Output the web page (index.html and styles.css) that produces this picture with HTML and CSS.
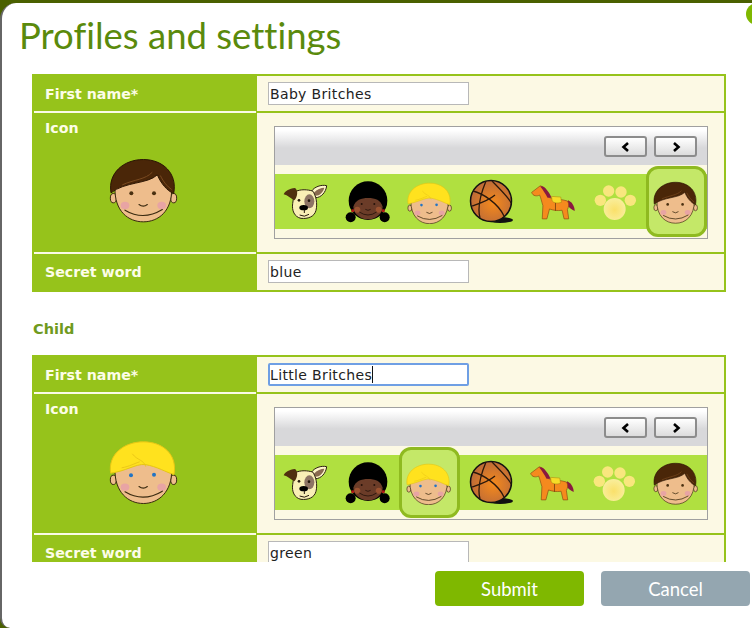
FILE: index.html
```html
<!DOCTYPE html>
<html lang="en">
<head>
    <meta charset="UTF-8">
    <meta name="viewport" content="width=device-width, initial-scale=1.0">
    <title>Profiles and settings</title>
    <link rel="stylesheet" href="styles.css">
</head>
<body>
    <svg class="sprites" width="0" height="0">
        <defs>
            <symbol id="ic-boy" viewBox="60 20 210 200">
                <ellipse cx="73" cy="146" rx="9" ry="14" fill="#eebd8c" stroke="#3a2a10" stroke-width="3"/>
                <ellipse cx="254" cy="146" rx="9" ry="14" fill="#eebd8c" stroke="#3a2a10" stroke-width="3"/>
                <path d="M78 115C78 50 248 50 248 115C250 185 208 217 163 217C118 217 76 185 78 115Z" fill="#eebd8c" stroke="#3a2a10" stroke-width="3"/>
                <path d="M66 130C56 70 105 30 163 30C222 30 266 72 254 132C234 124 216 102 205 76C176 104 108 96 66 130Z" fill="#4a2608" stroke="#2c1604" stroke-width="3"/>
                <path d="M100 106C135 90 170 90 190 68M214 78C224 98 234 110 248 120" fill="none" stroke="#7a4a20" stroke-width="3"/>
                <circle cx="127" cy="131" r="6" fill="#4a3010"/>
                <circle cx="195" cy="131" r="6" fill="#4a3010"/>
                <ellipse cx="108" cy="168" rx="13" ry="11" fill="#e8a4a4"/>
                <ellipse cx="218" cy="168" rx="13" ry="11" fill="#e8a4a4"/>
                <path d="M150 165Q163 175 175 165M108 182Q163 215 220 180" fill="none" stroke="#3a2a10" stroke-width="3.5" stroke-linecap="round"/>
            </symbol>
            <symbol id="ic-blond" viewBox="60 20 210 200">
                <ellipse cx="73" cy="148" rx="9" ry="14" fill="#eebd8c" stroke="#3a2a10" stroke-width="3"/>
                <ellipse cx="254" cy="148" rx="9" ry="14" fill="#eebd8c" stroke="#3a2a10" stroke-width="3"/>
                <path d="M78 115C78 50 248 50 248 115C250 185 208 219 163 219C118 219 76 185 78 115Z" fill="#eebd8c" stroke="#3a2a10" stroke-width="3"/>
                <path d="M65 128C56 72 105 34 163 34C222 34 266 72 255 132C232 126 205 108 168 102C140 100 110 122 65 128Z" fill="#ffe21e" stroke="#e6c614" stroke-width="3"/>
                <path d="M130 70C145 90 165 88 170 108M98 112C122 108 138 98 152 94" fill="none" stroke="#ecc818" stroke-width="3"/>
                <circle cx="126" cy="134" r="6" fill="#2274c4"/>
                <circle cx="195" cy="133" r="6" fill="#2274c4"/>
                <ellipse cx="108" cy="170" rx="13" ry="11" fill="#e8a4a4"/>
                <ellipse cx="218" cy="170" rx="13" ry="11" fill="#e8a4a4"/>
                <path d="M150 168Q163 178 175 168M108 184Q163 217 220 182" fill="none" stroke="#3a2a10" stroke-width="3.5" stroke-linecap="round"/>
            </symbol>
            <symbol id="ic-girl" viewBox="215 175 150 135">
                <circle cx="238" cy="290" r="15" fill="#000"/>
                <circle cx="340" cy="290" r="15" fill="#000"/>
                <circle cx="290" cy="240" r="58" fill="#000"/>
                <path d="M246 258C252 238 270 232 290 232C312 232 328 238 334 258C334 280 312 296 290 296C268 296 246 280 246 258Z" fill="#6b3c28"/>
                <rect x="240" y="266" width="8" height="8" fill="#b01818"/>
                <rect x="332" y="266" width="8" height="8" fill="#b01818"/>
                <ellipse cx="258" cy="267" rx="9" ry="9" fill="#9a5230"/>
                <ellipse cx="322" cy="267" rx="9" ry="9" fill="#9a5230"/>
                <circle cx="271" cy="250" r="3" fill="#24120a"/>
                <circle cx="309" cy="250" r="3" fill="#24120a"/>
                <path d="M282 266Q290 272 298 266M264 274Q290 292 316 274" fill="none" stroke="#24120a" stroke-width="2.5"/>
            </symbol>
            <symbol id="ic-dog" viewBox="30 185 150 120">
                <path d="M122 212C130 200 150 192 167 196C165 216 150 232 134 232Z" fill="#fff6c8" stroke="#2c2010" stroke-width="3"/>
                <path d="M128 218C138 206 150 202 160 202C156 216 146 226 134 226Z" fill="#8a6a50"/>
                <path d="M70 215C90 205 110 208 125 212C135 225 140 250 135 270C130 290 110 296 90 294C70 290 62 270 65 250Z" fill="#f9efb6" stroke="#2c2010" stroke-width="3"/>
                <ellipse cx="115" cy="243" rx="15" ry="21" fill="#8d7464"/>
                <path d="M72 203C55 203 40 215 38 222C50 225 60 235 70 240C80 230 82 210 72 203Z" fill="#50300f"/>
                <circle cx="84" cy="240" r="4" fill="#24180c"/>
                <circle cx="114" cy="241" r="4" fill="#24180c"/>
                <ellipse cx="98" cy="262" rx="13" ry="8" fill="#000"/>
                <path d="M100 268V278M86 284Q100 292 114 282" fill="none" stroke="#24180c" stroke-width="3"/>
            </symbol>
            <symbol id="ic-ball" viewBox="0 0 46 46">
                <defs>
                    <radialGradient id="ball-fill" cx="0.55" cy="0.55" r="0.6">
                        <stop offset="0" stop-color="#f58a1c"/>
                        <stop offset="1" stop-color="#b8683a"/>
                    </radialGradient>
                </defs>
                <ellipse cx="32" cy="41" rx="13" ry="3" fill="#111"/>
                <circle cx="23" cy="22" r="20.5" fill="url(#ball-fill)" stroke="#111" stroke-width="1.5"/>
                <path d="M5 12C14 14 30 24 36 37M24 2C32 10 42 20 43 24M18 2C13 14 9 28 12 39M4 27C10 25 20 22 27 16" fill="none" stroke="#2a180c" stroke-width="1.3"/>
            </symbol>
            <symbol id="ic-horse" viewBox="50 185 145 120">
                <path d="M168 240C182 246 188 262 188 272C178 268 170 262 164 252Z" fill="#8a1a40"/>
                <path d="M58 216L84 196L94 200C102 206 106 222 112 232C128 238 150 236 166 242C172 250 170 260 166 268L170 296H156L150 270C136 272 122 270 112 266L104 296H90L92 256C88 244 86 232 82 224C74 228 62 228 58 216Z" fill="#f58a1e" stroke="#8a4a10" stroke-width="2"/>
                <path d="M84 198C96 194 112 216 118 232L106 232C100 220 92 208 84 198Z" fill="#8a1a40"/>
                <path d="M118 228L146 230L148 246C138 250 124 248 120 242Z" fill="#f6dc28" stroke="#a08010" stroke-width="1.5"/>
                <path d="M130 248V272" stroke="#8a4a10" stroke-width="3"/>
            </symbol>
            <symbol id="ic-paw" viewBox="240 185 138 120">
                <defs>
                    <radialGradient id="paw-fill" cx="0.5" cy="0.55" r="0.55">
                        <stop offset="0" stop-color="#fae06a"/>
                        <stop offset="1" stop-color="#f9ee9c"/>
                    </radialGradient>
                </defs>
                <circle cx="265" cy="240" r="17" fill="#f9e67e"/>
                <circle cx="290" cy="212" r="17" fill="#f9e67e"/>
                <circle cx="327" cy="215" r="17" fill="#f9e67e"/>
                <circle cx="355" cy="240" r="17" fill="#f9e67e"/>
                <ellipse cx="308" cy="266" rx="33" ry="33" fill="url(#paw-fill)"/>
            </symbol>
            <symbol id="ic-prev" viewBox="0 0 12 12">
                <path d="M8 2L3.5 6L8 10" fill="none" stroke="#000" stroke-width="2.6"/>
            </symbol>
            <symbol id="ic-next" viewBox="0 0 12 12">
                <path d="M4 2L8.5 6L4 10" fill="none" stroke="#000" stroke-width="2.6"/>
            </symbol>
        </defs>
    </svg>

    <div class="dialog">
        <span class="close-btn"></span>
        <h1 class="title">Profiles and settings</h1>

        <div class="scroller">
            <div class="profile">
                <div class="label">First name*</div>
                <div class="value"><div class="field">Baby Britches</div></div>

                <div class="label label-icon">
                    Icon
                    <svg class="big-face" width="70" height="67"><use href="#ic-boy"/></svg>
                </div>
                <div class="value value-icon">
                    <div class="carousel">
                        <div class="carousel-head">
                            <button class="arrow"><svg width="12" height="12"><use href="#ic-prev"/></svg></button>
                            <button class="arrow"><svg width="12" height="12"><use href="#ic-next"/></svg></button>
                        </div>
                        <div class="band">
                            <div class="pick"><svg width="50" height="40"><use href="#ic-dog"/></svg></div>
                            <div class="pick"><svg width="50" height="45"><use href="#ic-girl"/></svg></div>
                            <div class="pick"><svg width="46" height="44"><use href="#ic-blond"/></svg></div>
                            <div class="pick"><svg width="46" height="46"><use href="#ic-ball"/></svg></div>
                            <div class="pick"><svg width="48" height="40"><use href="#ic-horse"/></svg></div>
                            <div class="pick"><svg width="46" height="40"><use href="#ic-paw"/></svg></div>
                            <div class="pick selected"><svg width="46" height="44"><use href="#ic-boy"/></svg></div>
                        </div>
                    </div>
                </div>

                <div class="label last">Secret word</div>
                <div class="value last"><div class="field">blue</div></div>
            </div>

            <h2 class="group-name">Child</h2>

            <div class="profile">
                <div class="label">First name*</div>
                <div class="value"><div class="field focused">Little Britches<span class="caret"></span></div></div>

                <div class="label label-icon">
                    Icon
                    <svg class="big-face" width="70" height="67"><use href="#ic-blond"/></svg>
                </div>
                <div class="value value-icon">
                    <div class="carousel">
                        <div class="carousel-head">
                            <button class="arrow"><svg width="12" height="12"><use href="#ic-prev"/></svg></button>
                            <button class="arrow"><svg width="12" height="12"><use href="#ic-next"/></svg></button>
                        </div>
                        <div class="band">
                            <div class="pick"><svg width="50" height="40"><use href="#ic-dog"/></svg></div>
                            <div class="pick"><svg width="50" height="45"><use href="#ic-girl"/></svg></div>
                            <div class="pick selected"><svg width="46" height="44"><use href="#ic-blond"/></svg></div>
                            <div class="pick"><svg width="46" height="46"><use href="#ic-ball"/></svg></div>
                            <div class="pick"><svg width="48" height="40"><use href="#ic-horse"/></svg></div>
                            <div class="pick"><svg width="46" height="40"><use href="#ic-paw"/></svg></div>
                            <div class="pick"><svg width="46" height="44"><use href="#ic-boy"/></svg></div>
                        </div>
                    </div>
                </div>

                <div class="label last">Secret word</div>
                <div class="value last"><div class="field">green</div></div>
            </div>
        </div>

        <div class="footer">
            <button class="btn btn-submit">Submit</button>
            <button class="btn btn-cancel">Cancel</button>
        </div>
    </div>
</body>
</html>
```

FILE: styles.css
```css
html, body {
    height: 100%;
}

body {
    margin: 0;
    overflow: hidden;
    background: #4a6000;
    font-family: "DejaVu Sans", Verdana, sans-serif;
}

.sprites {
    display: block;
    height: 0;
}

.dialog {
    position: relative;
    box-sizing: border-box;
    height: 625px;
    margin-top: 3px;
    border-left: 2px solid #666;
    border-radius: 16px 0 0 10px;
    background: #fff;
    display: flex;
    flex-direction: column;
    overflow: hidden;
}

.close-btn {
    position: absolute;
    top: 0;
    right: -16px;
    width: 22px;
    height: 22px;
    border-radius: 50%;
    background: #7fb800;
}

.title {
    margin: 0;
    padding: 9px 0 0 17px;
    height: 53px;
    box-sizing: border-box;
    font-family: "Lato", "Open Sans", sans-serif;
    font-size: 36.5px;
    font-variant-ligatures: none;
    line-height: 46px;
    font-weight: 400;
    color: #5a8a0c;
}

.scroller {
    height: 506px;
    padding: 18px 0 0 30px;
    box-sizing: border-box;
    overflow: hidden;
}

.profile {
    width: 694px;
    box-sizing: border-box;
    border: 2px solid #96c31b;
    background: #96c31b;
    display: grid;
    grid-template-columns: 221px 1fr;
    grid-template-rows: 37px 141px 36px;
    column-gap: 2px;
}

.label {
    box-sizing: border-box;
    border-bottom: 2px solid #fbfbe6;
    padding-left: 11px;
    background: #96c31b;
    color: #fdfde8;
    font-size: 14.2px;
    font-weight: 700;
    line-height: 36px;
    margin-right: -1px;
}

.label.last {
    border-bottom: 0;
}

.label-icon {
    display: flex;
    flex-direction: column;
    line-height: 16px;
    padding-top: 7px;
}

.big-face {
    margin: 20px 0 0 64px;
}

.value {
    box-sizing: border-box;
    border-bottom: 2px solid #96c31b;
    background: #fcf9e4;
    padding: 6px 0 0 11px;
}

.value.last {
    border-bottom: 0;
}

.value-icon {
    padding: 13px 0 0 17px;
}

.field {
    box-sizing: border-box;
    width: 201px;
    height: 23px;
    border: 1px solid #b8b8b8;
    background: #fff;
    padding-left: 1px;
    font-size: 14px;
    letter-spacing: 0.35px;
    line-height: 22px;
    color: #222;
    white-space: nowrap;
}

.field.focused {
    border: 2px solid #6f9fe4;
    border-radius: 2px;
    line-height: 20px;
    padding-left: 0;
}

.caret {
    display: inline-block;
    width: 1px;
    height: 17px;
    background: #111;
    vertical-align: -3px;
}

.carousel {
    box-sizing: border-box;
    width: 434px;
    height: 113px;
    border: 1px solid #a0a0a0;
    background: #fcf9e4;
}

.carousel-head {
    height: 38px;
    box-sizing: border-box;
    padding: 9px 10px 0 0;
    background: linear-gradient(#fff 8%, #d8d8da 55%);
    display: flex;
    justify-content: flex-end;
    align-items: flex-start;
    gap: 7px;
}

.arrow {
    width: 43px;
    height: 21px;
    padding: 0;
    border: 2px solid #8c8c8c;
    border-radius: 3px;
    background: linear-gradient(#fff, #dcdcdc);
    display: flex;
    align-items: center;
    justify-content: center;
}

.band {
    height: 55px;
    margin-top: 9px;
    background: #b0e040;
    display: flex;
}

.pick {
    flex: 1;
    display: flex;
    align-items: center;
    justify-content: center;
}

.pick.selected {
    flex: none;
    width: 61px;
    box-sizing: border-box;
    margin: -8px 0;
    border: 3px solid #8fba20;
    border-radius: 12px;
    background: #c4e868;
}

.group-name {
    margin: 0;
    padding-left: 1px;
    height: 63px;
    font-size: 14.5px;
    font-weight: 700;
    line-height: 74px;
    color: #6f9a20;
}

.footer {
    flex: 1;
    display: flex;
    justify-content: flex-end;
    align-items: flex-start;
    gap: 17px;
    padding: 9px 0 0 0;
}

.btn {
    width: 149px;
    height: 35px;
    border: 0;
    border-radius: 4px;
    color: #fff;
    font-family: "Lato", "Open Sans", sans-serif;
    font-size: 18.5px;
}

.btn-submit {
    background: #7fb800;
}

.btn-cancel {
    background: #94a6b0;
    margin-right: 2px;
}
```
